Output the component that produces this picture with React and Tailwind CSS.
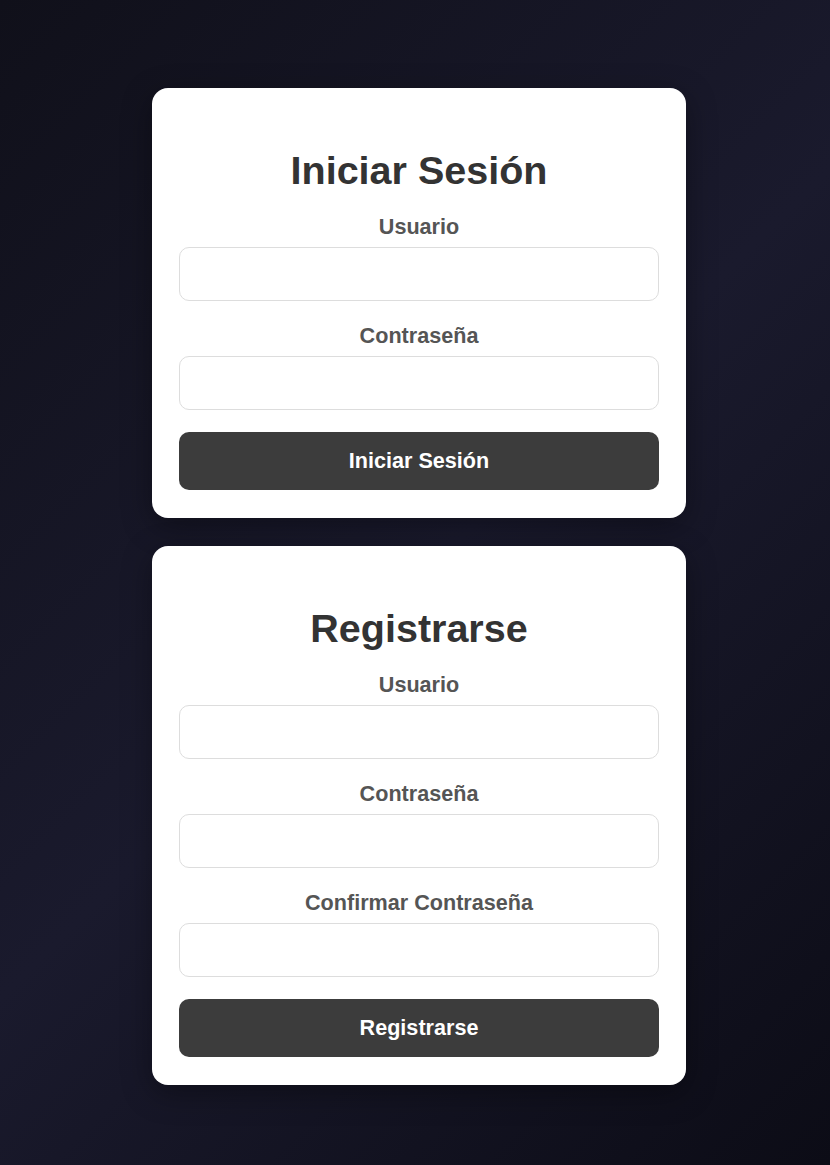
export default function App() {
  const Field = ({ label, type }) => (
    <div className="flex flex-col">
      <label className="text-center text-[21.6px] leading-[25px] font-bold text-[#555555]">{label}</label>
      <input
        type={type}
        className="mt-[8px] h-[54px] w-full rounded-[10px] border border-[#dddddd] bg-white px-3 outline-none"
      />
    </div>
  );

  const Card = ({ title, fields, button }) => (
    <div className="w-[534px] rounded-[16px] bg-white px-[27px] pt-[58px] pb-[28px] shadow-[0_8px_30px_rgba(0,0,0,0.35)]">
      <h2 className="text-center text-[39.5px] leading-[48px] font-bold text-[#333333]">{title}</h2>
      <div className="mt-[20px] flex flex-col gap-[22px]">
        {fields.map((f, i) => (
          <Field key={i} label={f.label} type={f.type} />
        ))}
        <button className="h-[58px] w-full rounded-[10px] bg-[#3c3c3c] text-[21.6px] font-bold text-white">
          {button}
        </button>
      </div>
    </div>
  );

  return (
    <div
      className="min-h-[1165px] w-full flex flex-col items-center gap-[28px] pt-[88px] pb-[80px] pl-[8px] bg-[linear-gradient(135deg,#10101a_0%,#1a1a2d_50%,#0c0c16_100%)]"
      style={{ fontFamily: '"Liberation Sans", Arial, sans-serif' }}
    >
      <Card
        title="Iniciar Sesión"
        fields={[
          { label: "Usuario", type: "text" },
          { label: "Contraseña", type: "password" },
        ]}
        button="Iniciar Sesión"
      />
      <Card
        title="Registrarse"
        fields={[
          { label: "Usuario", type: "text" },
          { label: "Contraseña", type: "password" },
          { label: "Confirmar Contraseña", type: "password" },
        ]}
        button="Registrarse"
      />
    </div>
  );
}
